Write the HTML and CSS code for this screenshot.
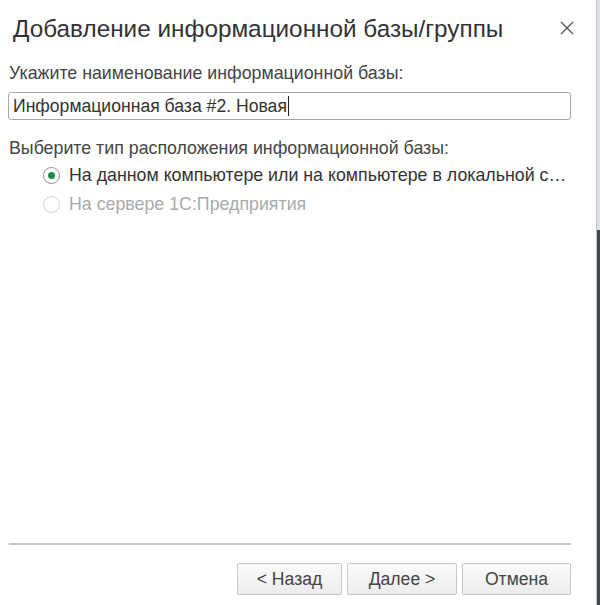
FILE: index.html
```html
<!DOCTYPE html>
<html lang="ru">
<head>
<meta charset="utf-8">
<link rel="stylesheet" href="styles.css">
</head>
<body>
<div class="screen">
  <div class="dialog">
    <div class="header">
      <div class="title">Добавление информационной базы/группы</div>
      <svg class="close" width="16" height="16" viewBox="0 0 16 16"><path d="M2 2L14 14M14 2L2 14" stroke="#555" stroke-width="1.3" fill="none"/></svg>
    </div>
    <div class="content">
      <div class="label">Укажите наименование информационной базы:</div>
      <div class="input"><span>Информационная база #2. Новая</span><span class="caret"></span></div>
      <div class="label second">Выберите тип расположения информационной базы:</div>
      <div class="radios">
        <div class="radio-row"><span class="radio checked"></span><span class="rtext">На данном компьютере или на компьютере в локальной с…</span></div>
        <div class="radio-row disabled"><span class="radio"></span><span class="rtext">На сервере 1С:Предприятия</span></div>
      </div>
    </div>
    <div class="footer">
      <div class="sep"></div>
      <div class="buttons">
        <div class="btn">&lt; Назад</div>
        <div class="btn">Далее &gt;</div>
        <div class="btn">Отмена</div>
      </div>
    </div>
  </div>
  <div class="edge">
    <div class="edge-top"></div>
    <div class="edge-bottom"></div>
  </div>
</div>
</body>
</html>
```
FILE: styles.css
```css
* { box-sizing: border-box; }
html, body { margin: 0; padding: 0; }
body {
  width: 600px;
  height: 605px;
  font-family: "Liberation Sans", Arial, sans-serif;
  color: #333;
  background: #fff;
  overflow: hidden;
}
.screen {
  display: flex;
  width: 600px;
  height: 605px;
}
.dialog {
  width: 597px;
  height: 605px;
  border-right: 1px solid #c4c4c4;
  display: flex;
  flex-direction: column;
  background: #fff;
}
.header {
  display: flex;
  align-items: center;
  justify-content: space-between;
  height: 56px;
  padding: 0 21px 0 13px;
}
.title {
  font-size: 24.3px;
  color: #333;
  padding-top: 1px;
}
.close { display: block; }
.content {
  flex: 1;
  padding: 7px 25px 0 9px;
}
.label {
  font-size: 17.8px;
  line-height: 20px;
  color: #444;
}
.label.second { margin-top: 18px; }
.input {
  margin-top: 9px;
  margin-left: -1px;
  height: 28px;
  border: 1px solid #a8a8a8;
  border-radius: 3px;
  padding: 0 4px;
  display: flex;
  align-items: center;
  font-size: 17.6px;
  color: #333;
}
.caret {
  display: inline-block;
  width: 1px;
  height: 20px;
  background: #222;
  margin-left: 1px;
}
.radios {
  margin-top: 2px;
  padding-left: 34px;
}
.radio-row {
  display: flex;
  align-items: center;
  height: 31px;
  font-size: 17.8px;
  color: #333;
}
.radio-row.disabled { color: #aaa; height: 26px; }
.radio {
  width: 17px;
  height: 17px;
  border-radius: 50%;
  border: 1px solid #8e8e8e;
  margin-right: 9px;
  display: flex;
  align-items: center;
  justify-content: center;
  background: #fff;
}
.radio.checked::after {
  content: "";
  width: 7px;
  height: 7px;
  border-radius: 50%;
  background: #1e8a4a;
}
.disabled .radio { border-color: #d4d4d4; }
.footer {
  padding: 0 25px 10px 9px;
}
.sep {
  height: 2px;
  background: #c8c8c8;
  margin-bottom: 18px;
}
.buttons {
  display: flex;
  justify-content: flex-end;
  gap: 5px;
}
.btn {
  width: 106px;
  height: 32px;
  border: 1px solid #c7c7c7;
  border-radius: 2px;
  background: linear-gradient(#fbfbfb, #ececec);
  display: flex;
  align-items: center;
  justify-content: center;
  font-size: 17.6px;
  color: #444;
}
.btn:first-child { width: 105px; }
.btn:nth-child(2) { width: 110px; }
.btn:nth-child(3) { width: 109px; }
.edge {
  width: 3px;
  display: flex;
  flex-direction: column;
}
.edge-top { height: 230px; background: #dde2e6; }
.edge-bottom { flex: 1; background: #3c4a55; }
```
